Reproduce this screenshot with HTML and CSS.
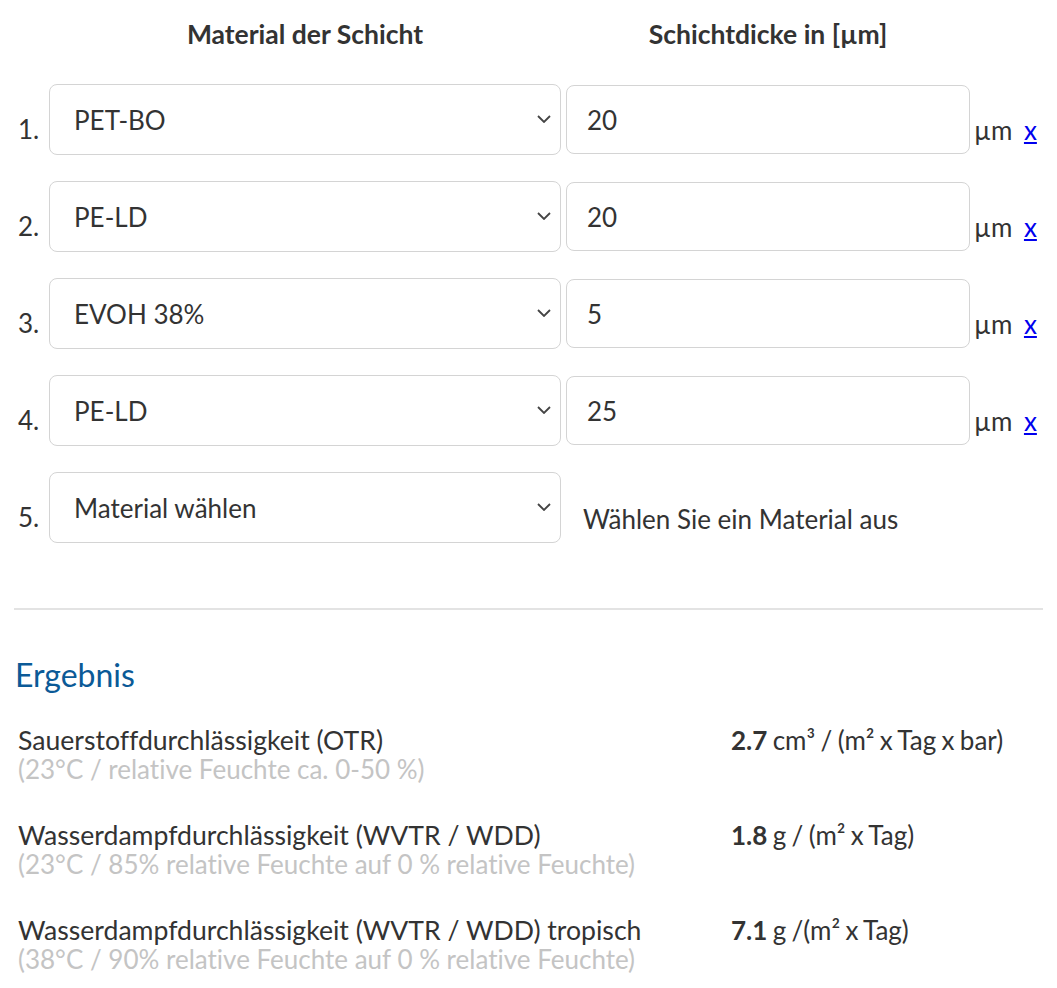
FILE: index.html
```html
<!DOCTYPE html>
<html lang="de">
<head>
<meta charset="utf-8">
<title>Schichtrechner</title>
<link rel="stylesheet" href="styles.css">
</head>
<body>
<div class="page">
  <div class="layers">
    <div class="row head">
      <div></div>
      <div class="th">Material der Schicht</div>
      <div class="th">Schichtdicke in [µm]</div>
      <div></div>
    </div>

    <div class="row">
      <div class="num">1.</div>
      <div class="select"><span>PET-BO</span><svg class="chev" viewBox="0 0 14 8"><path d="M1 1l6 6 6-6"/></svg></div>
      <div class="input">20</div>
      <div class="unit">µm <a href="#">x</a></div>
    </div>
    <div class="row">
      <div class="num">2.</div>
      <div class="select"><span>PE-LD</span><svg class="chev" viewBox="0 0 14 8"><path d="M1 1l6 6 6-6"/></svg></div>
      <div class="input">20</div>
      <div class="unit">µm <a href="#">x</a></div>
    </div>
    <div class="row">
      <div class="num">3.</div>
      <div class="select"><span>EVOH 38%</span><svg class="chev" viewBox="0 0 14 8"><path d="M1 1l6 6 6-6"/></svg></div>
      <div class="input">5</div>
      <div class="unit">µm <a href="#">x</a></div>
    </div>
    <div class="row">
      <div class="num">4.</div>
      <div class="select"><span>PE-LD</span><svg class="chev" viewBox="0 0 14 8"><path d="M1 1l6 6 6-6"/></svg></div>
      <div class="input">25</div>
      <div class="unit">µm <a href="#">x</a></div>
    </div>
    <div class="row">
      <div class="num">5.</div>
      <div class="select"><span>Material wählen</span><svg class="chev" viewBox="0 0 14 8"><path d="M1 1l6 6 6-6"/></svg></div>
      <div class="hint">Wählen Sie ein Material aus</div>
      <div></div>
    </div>
  </div>

  <hr class="sep">

  <h2 class="title">Ergebnis</h2>

  <div class="results">
    <div class="res">
      <div class="label">Sauerstoffdurchlässigkeit (OTR)<div class="sub">(23°C / relative Feuchte ca. 0-50 %)</div></div>
      <div class="value"><b>2.7</b> cm³ / (m² x Tag x bar)</div>
    </div>
    <div class="res">
      <div class="label">Wasserdampfdurchlässigkeit (WVTR / WDD)<div class="sub">(23°C / 85% relative Feuchte auf 0 % relative Feuchte)</div></div>
      <div class="value"><b>1.8</b> g / (m² x Tag)</div>
    </div>
    <div class="res">
      <div class="label">Wasserdampfdurchlässigkeit (WVTR / WDD) tropisch<div class="sub">(38°C / 90% relative Feuchte auf 0 % relative Feuchte)</div></div>
      <div class="value"><b>7.1</b> g /(m² x Tag)</div>
    </div>
  </div>
</div>
</body>
</html>
```

FILE: styles.css
```css
* { box-sizing: border-box; }
html, body { margin: 0; padding: 0; background: #fff; }
body {
  font-family: Lato, "Open Sans", sans-serif;
  font-size: 26px;
  color: #333;
  font-variant-ligatures: none;
}
.page { padding: 0 14px; }

.layers { display: flex; flex-direction: column; gap: 26px; }
.row {
  display: grid;
  grid-template-columns: 35px 512px 409px 1fr;
  column-gap: 0;
  align-items: end;
}
.row.head { align-items: center; height: 58px; padding-top: 9px; }
.th { font-weight: 700; text-align: center; font-size: 26.5px; }
.row.head .th:nth-child(3) { margin-left: 5px; }

.num { padding-left: 4px; padding-bottom: 13px; line-height: 1; }
.select, .input {
  height: 71px;
  border: 1px solid #d4d4d4;
  border-radius: 8px;
  display: flex;
  align-items: center;
  padding: 0 9px 0 24px;
  line-height: 1;
}
.select span { flex: 1; }
.chev { width: 14px; height: 8px; fill: none; stroke: #444; stroke-width: 1.8; margin-bottom: 2px; }
.input { height: 69px; margin-left: 5px; margin-bottom: 1px; padding-left: 20px; }
.unit { padding-left: 4px; padding-bottom: 12px; line-height: 1; white-space: nowrap; }
.unit a { color: #0000ee; margin-left: 5px; }
.hint { padding-left: 22px; padding-bottom: 11px; line-height: 1; }

.sep {
  border: 0;
  border-top: 2px solid #e3e3e3;
  margin: 65px 0 0 0;
}
.title {
  font-weight: 400;
  font-size: 32px;
  color: #0b5a97;
  margin: 46px 0 0 1px;
  line-height: 1.2;
}
.results { margin-top: 32px; padding-left: 4px; }
.res {
  display: grid;
  grid-template-columns: 713px 1fr;
  line-height: 29px;
  margin-bottom: 37px;
}
.label { font-size: 26.6px; }
.sub { color: #c4c4c4; font-size: 26px; }
.value { word-spacing: -1.3px; }
.value b { font-weight: 700; }
```
